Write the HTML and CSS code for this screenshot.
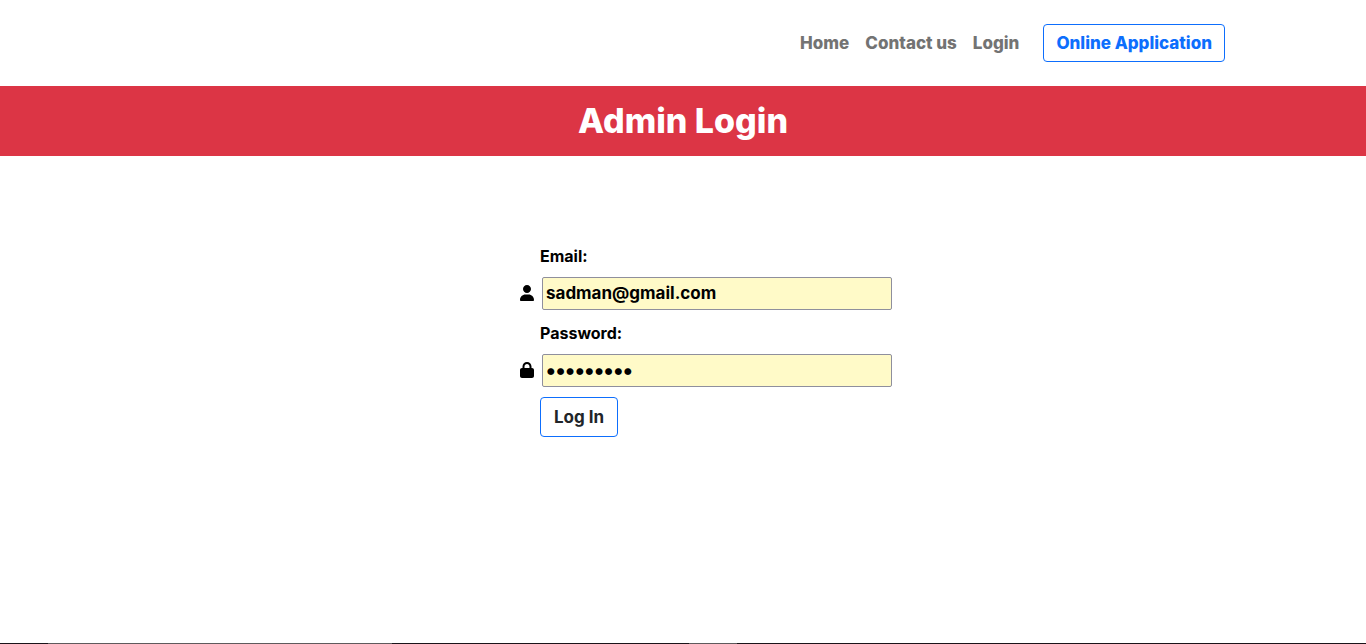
FILE: index.html
```
<!DOCTYPE html>
<html lang="en">
<head>
  <meta charset="utf-8">
  <meta name="viewport" content="width=device-width, initial-scale=1">
  <title>Admin Login</title>
  <link rel="stylesheet" href="styles.css">
</head>
<body>
  <header class="site-header">
    <nav class="nav">
      <a class="nav-link" href="#home">Home</a>
      <a class="nav-link" href="#contact">Contact us</a>
      <a class="nav-link" href="#login">Login</a>
      <a class="btn btn-nav" href="#apply">Online Application</a>
    </nav>
  </header>
  <h1 class="banner">Admin Login</h1>
  <main class="content">
    <form class="login-form">
      <label class="label" for="email">Email:</label>
      <div class="field">
        <svg class="icon" viewBox="0 0 448 512" aria-hidden="true"><path d="M224 256c70.700 0 128-57.310 128-128s-57.300-128-128-128C153.300 0 96 57.310 96 128S153.300 256 224 256zM274.700 304H173.300C77.610 304 0 381.600 0 477.300c0 19.140 15.520 34.670 34.660 34.670h378.700C432.500 512 448 496.500 448 477.300C448 381.600 370.400 304 274.700 304z"/></svg>
        <input class="input" id="email" type="email" value="sadman@gmail.com">
      </div>
      <label class="label" for="password">Password:</label>
      <div class="field">
        <svg class="icon" viewBox="0 0 448 512" aria-hidden="true"><path d="M80 192V144C80 64.470 144.500 0 224 0C303.500 0 368 64.470 368 144V192H384C419.300 192 448 220.700 448 256V448C448 483.300 419.300 512 384 512H64C28.650 512 0 483.300 0 448V256C0 220.700 28.650 192 64 192H80zM144 192H304V144C304 99.820 268.200 64 224 64C179.800 64 144 99.820 144 144V192z"/></svg>
        <input class="input input-password" id="password" type="password" value="sadman123">
      </div>
      <button class="btn btn-submit" type="button">Log In</button>
    </form>
  </main>
  <footer class="edge">
    <span class="edge-dark edge-first"></span>
    <span class="edge-light edge-wide"></span>
    <span class="edge-dark edge-middle"></span>
    <span class="edge-light edge-first"></span>
    <span class="edge-dark edge-rest"></span>
  </footer>
</body>
</html>
```
FILE: styles.css
```
* {
  box-sizing: border-box;
}

body {
  display: flex;
  flex-direction: column;
  min-height: 100vh;
  margin: 0;
  background: #fff;
  color: #000;
  font-family: Inter, "Liberation Sans", sans-serif;
  font-size: 17px;
  font-weight: 700;
  line-height: 24px;
}

.site-header {
  width: 100%;
  max-width: 1140px;
  margin: 0 auto;
  padding: 24px 28px;
}

.nav {
  display: flex;
  flex-wrap: wrap;
  align-items: center;
  justify-content: flex-end;
  gap: 16px;
  font-weight: 800;
}

.nav-link {
  color: #737373;
  text-decoration: none;
}

.btn {
  border: 1px solid #0d6efd;
  border-radius: 4px;
  background: #fff;
  font: inherit;
  text-decoration: none;
}

.btn-nav {
  margin-left: 8px;
  padding: 6px 12px;
  color: #0d6efd;
}

.banner {
  margin: 0;
  padding: 15px 16px;
  background: #dc3545;
  color: #fff;
  font-size: 34px;
  font-weight: 800;
  line-height: 40px;
  text-align: center;
}

.content {
  display: flex;
  justify-content: center;
  padding: 87px 0 32px 46px;
}

.login-form {
  display: flex;
  flex-direction: column;
  width: 372px;
}

.label {
  margin-left: 20px;
  padding-top: 1px;
  font-size: 16px;
}

.field {
  display: flex;
  align-items: center;
  gap: 8px;
  margin: 9px 0 10px;
}

.icon {
  flex: none;
  width: 14px;
  height: 16px;
  margin-bottom: 1px;
}

.input {
  flex: 1;
  min-width: 0;
  height: 33px;
  padding: 0 3px 1px;
  border: 1px solid #8f8f9d;
  border-radius: 2px;
  background: #fffac8;
  color: #000;
  font: inherit;
}

.input-password {
  font-size: 22px;
  font-weight: 800;
}

.btn-submit {
  align-self: flex-start;
  margin-left: 20px;
  padding: 7px 13px;
  color: #212529;
}

.edge {
  display: flex;
  height: 1px;
  margin-top: auto;
}

.edge-dark {
  background: #1a1419;
}

.edge-light {
  background: #5e5a5c;
}

.edge-first {
  width: 48px;
}

.edge-wide {
  width: 344px;
}

.edge-middle {
  width: 297px;
}

.edge-rest {
  flex: 1;
}
```
